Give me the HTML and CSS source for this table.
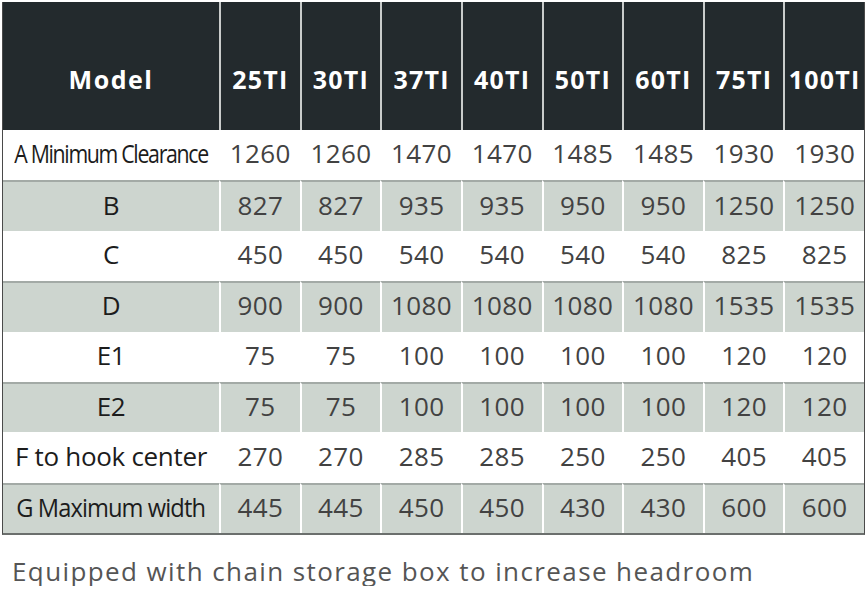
FILE: index.html
```html
<!DOCTYPE html>
<html>
<head>
<meta charset="utf-8">
<link rel="stylesheet" href="styles.css">
</head>
<body>
<div class="page">
  <table class="spec">
    <colgroup>
      <col class="c-label">
      <col><col><col><col><col><col><col><col>
    </colgroup>
    <thead>
      <tr>
        <th>Model</th><th>25TI</th><th>30TI</th><th>37TI</th><th>40TI</th><th>50TI</th><th>60TI</th><th>75TI</th><th>100TI</th>
      </tr>
    </thead>
    <tbody>
      <tr><td class="lbl"><span class="narrow">A Minimum Clearance</span></td><td>1260</td><td>1260</td><td>1470</td><td>1470</td><td>1485</td><td>1485</td><td>1930</td><td>1930</td></tr>
      <tr class="alt"><td class="lbl">B</td><td>827</td><td>827</td><td>935</td><td>935</td><td>950</td><td>950</td><td>1250</td><td>1250</td></tr>
      <tr><td class="lbl">C</td><td>450</td><td>450</td><td>540</td><td>540</td><td>540</td><td>540</td><td>825</td><td>825</td></tr>
      <tr class="alt"><td class="lbl">D</td><td>900</td><td>900</td><td>1080</td><td>1080</td><td>1080</td><td>1080</td><td>1535</td><td>1535</td></tr>
      <tr><td class="lbl">E1</td><td>75</td><td>75</td><td>100</td><td>100</td><td>100</td><td>100</td><td>120</td><td>120</td></tr>
      <tr class="alt"><td class="lbl">E2</td><td>75</td><td>75</td><td>100</td><td>100</td><td>100</td><td>100</td><td>120</td><td>120</td></tr>
      <tr><td class="lbl">F to hook center</td><td>270</td><td>270</td><td>285</td><td>285</td><td>250</td><td>250</td><td>405</td><td>405</td></tr>
      <tr class="alt"><td class="lbl"><span class="narrow narrow-g">G Maximum width</span></td><td>445</td><td>445</td><td>450</td><td>450</td><td>430</td><td>430</td><td>600</td><td>600</td></tr>
    </tbody>
  </table>
  <p class="note">Equipped with chain storage box to increase headroom</p>
</div>
</body>
</html>
```
FILE: styles.css
```css
html, body {
  margin: 0;
  padding: 0;
  background: #ffffff;
}

.page {
  padding: 2px 0 0 2px;
  font-family: "Open Sans", "Noto Sans", sans-serif;
}

.spec {
  width: 863px;
  table-layout: fixed;
  border-collapse: separate;
  border-spacing: 0;
  border-left: 1px solid #4a4a4a;
  border-right: 1px solid #4a4a4a;
  border-bottom: 2px solid #6b6f6d;
}

.spec .c-label {
  width: 216px;
}

.spec th {
  height: 128px;
  background: #232a2d;
  color: #ffffff;
  font-weight: 700;
  font-size: 25px;
  letter-spacing: 1.2px;
  padding: 26px 0 0 0;
  box-sizing: border-box;
  text-align: center;
  vertical-align: middle;
  border-left: 2px solid #c9cccb;
  white-space: nowrap;
}

.spec th:first-child {
  border-left: none;
  letter-spacing: 1.5px;
}

.spec td {
  height: 50.4px;
  box-sizing: border-box;
  padding: 0 0 4px 0;
  text-align: center;
  vertical-align: middle;
  font-size: 26px;
  color: #424242;
  letter-spacing: 0.4px;
  border-left: 2px solid #ffffff;
  white-space: nowrap;
}

.spec td.lbl {
  border-left: none;
  color: #1c1c1c;
  letter-spacing: -0.3px;
}

.spec tr.alt td {
  background: #cdd5cf;
  border-top: 2px solid #a3aaa6;
}

.narrow {
  display: inline-block;
  letter-spacing: -1.6px;
  transform: scaleX(0.82);
  transform-origin: center;
  margin: 0 -30px;
}

.narrow-g {
  letter-spacing: -1px;
  transform: scaleX(0.91);
}

.note {
  margin: 21px 0 0 10px;
  font-size: 26px;
  line-height: 30px;
  color: #555555;
  letter-spacing: 1.4px;
}
```
